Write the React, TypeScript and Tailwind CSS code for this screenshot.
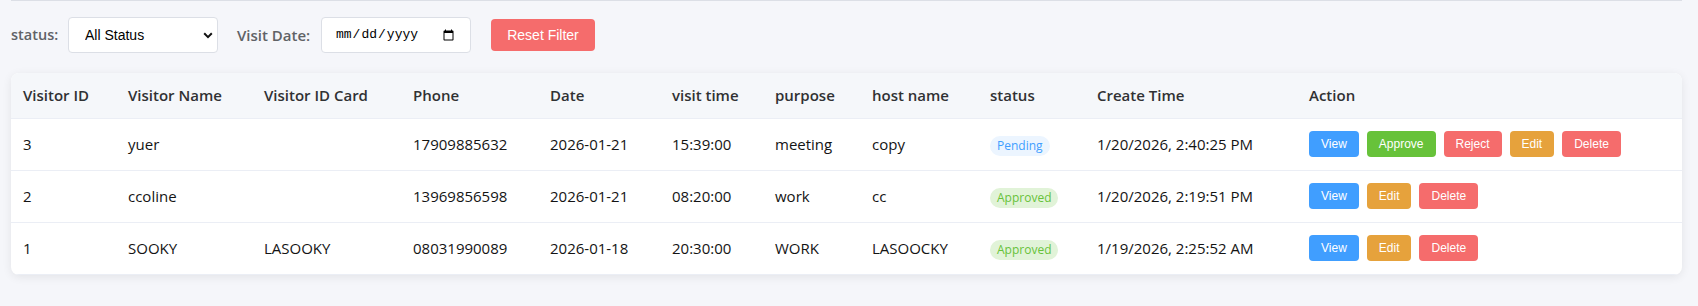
import React, { useState } from "react";

type Visitor = {
  id: number;
  name: string;
  card: string;
  phone: string;
  date: string;
  time: string;
  purpose: string;
  host: string;
  status: "Pending" | "Approved";
  created: string;
};

const visitors: Visitor[] = [
  {
    id: 3,
    name: "yuer",
    card: "",
    phone: "17909885632",
    date: "2026-01-21",
    time: "15:39:00",
    purpose: "meeting",
    host: "copy",
    status: "Pending",
    created: "1/20/2026, 2:40:25 PM",
  },
  {
    id: 2,
    name: "ccoline",
    card: "",
    phone: "13969856598",
    date: "2026-01-21",
    time: "08:20:00",
    purpose: "work",
    host: "cc",
    status: "Approved",
    created: "1/20/2026, 2:19:51 PM",
  },
  {
    id: 1,
    name: "SOOKY",
    card: "LASOOKY",
    phone: "08031990089",
    date: "2026-01-18",
    time: "20:30:00",
    purpose: "WORK",
    host: "LASOOCKY",
    status: "Approved",
    created: "1/19/2026, 2:25:52 AM",
  },
];

const headers = [
  "Visitor ID",
  "Visitor Name",
  "Visitor ID Card",
  "Phone",
  "Date",
  "visit time",
  "purpose",
  "host name",
  "status",
  "Create Time",
  "Action",
];

const colWidths = [
  "w-[105px]",
  "w-[136px]",
  "w-[149px]",
  "w-[137px]",
  "w-[122px]",
  "w-[103px]",
  "w-[97px]",
  "w-[118px]",
  "w-[107px]",
  "w-[212px]",
  "w-auto",
];

const ActionButton = ({
  label,
  color,
}: {
  label: string;
  color: string;
}) => (
  <button
    className={`h-[26px] px-[12px] rounded-[4px] text-white text-[12px] font-['Liberation_Sans',Arial,sans-serif] leading-none ${color}`}
  >
    {label}
  </button>
);

const StatusTag = ({ status }: { status: Visitor["status"] }) => {
  const pending = status === "Pending";
  return (
    <span
      className={`inline-flex items-center justify-center h-5 px-[7px] rounded-full text-[12px] leading-none ${
        pending
          ? "bg-[#ecf5ff] text-[#409eff]"
          : "bg-[#e1f3d8] text-[#67c23a]"
      }`}
    >
      {status}
    </span>
  );
};

export default function App() {
  const [status, setStatus] = useState("");
  const [visitDate, setVisitDate] = useState("");

  return (
    <div className="min-h-screen bg-[#f5f6fa] pl-[11px] pr-[16px] font-['Open_Sans',sans-serif]">
      <div className="border-t border-[#dcdfe6] pt-[16px]">
        {/* filters */}
        <div className="flex items-center h-9">
          <label className="w-[57px] text-[14.5px] font-semibold text-[#606266]">
            status:
          </label>
          <div className="relative w-[150px] h-9">
            <select
              value={status}
              onChange={(e) => setStatus(e.target.value)}
              className="appearance-none w-full h-full pl-[16px] pr-8 bg-white border border-[#dcdfe6] rounded-[4px] text-[14px] text-black font-['Liberation_Sans',Arial,sans-serif] outline-none"
            >
              <option value="">All Status</option>
              <option value="pending">Pending</option>
              <option value="approved">Approved</option>
              <option value="rejected">Rejected</option>
            </select>
            <svg
              className="absolute right-[5px] top-[15px] pointer-events-none"
              width="10"
              height="7"
              viewBox="0 0 10 7"
            >
              <path
                d="M1.2 1.3 5 5.1 8.8 1.3"
                fill="none"
                stroke="#111"
                strokeWidth="2"
              />
            </svg>
          </div>

          <label className="ml-[19px] w-[84px] text-[15px] font-semibold text-[#606266]">
            Visit Date:
          </label>
          <input
            type="date"
            value={visitDate}
            onChange={(e) => setVisitDate(e.target.value)}
            className="w-[150px] h-9 pl-[13px] pr-[13px] bg-white border border-[#dcdfe6] rounded-[4px] text-[13px] text-black font-['Liberation_Mono',monospace] outline-none"
          />

          <button
            onClick={() => {
              setStatus("");
              setVisitDate("");
            }}
            className="ml-[20px] w-[104px] h-8 rounded-[4px] bg-[#f56c6c] text-white text-[14px] font-['Liberation_Sans',Arial,sans-serif]"
          >
            Reset Filter
          </button>
        </div>

        {/* table */}
        <div className="mt-[20px] bg-white rounded-lg shadow-[0_2px_10px_rgba(0,0,0,0.08)] overflow-hidden">
          <table className="w-full table-fixed border-collapse text-left">
            <colgroup>
              {colWidths.map((w, i) => (
                <col key={i} className={w} />
              ))}
            </colgroup>
            <thead>
              <tr className="bg-[#f5f7fa] border-b border-[#ebeef5]">
                {headers.map((h) => (
                  <th
                    key={h}
                    className="h-[45px] px-3 text-[15px] font-semibold text-[#303133]"
                  >
                    {h}
                  </th>
                ))}
              </tr>
            </thead>
            <tbody>
              {visitors.map((v) => (
                <tr
                  key={v.id}
                  className="border-b border-[#ebeef5] text-[15px] text-[#141414]"
                >
                  <td className="h-[52px] px-3">{v.id}</td>
                  <td className="px-3">{v.name}</td>
                  <td className="px-3">{v.card}</td>
                  <td className="px-3">{v.phone}</td>
                  <td className="px-3">{v.date}</td>
                  <td className="px-3">{v.time}</td>
                  <td className="px-3">{v.purpose}</td>
                  <td className="px-3">{v.host}</td>
                  <td className="px-3">
                    <StatusTag status={v.status} />
                  </td>
                  <td className="px-3">{v.created}</td>
                  <td className="px-3">
                    <div className="flex gap-2">
                      <ActionButton label="View" color="bg-[#409eff]" />
                      {v.status === "Pending" && (
                        <>
                          <ActionButton label="Approve" color="bg-[#67c23a]" />
                          <ActionButton label="Reject" color="bg-[#f56c6c]" />
                        </>
                      )}
                      <ActionButton label="Edit" color="bg-[#e6a23c]" />
                      <ActionButton label="Delete" color="bg-[#f56c6c]" />
                    </div>
                  </td>
                </tr>
              ))}
            </tbody>
          </table>
        </div>
      </div>
    </div>
  );
}
